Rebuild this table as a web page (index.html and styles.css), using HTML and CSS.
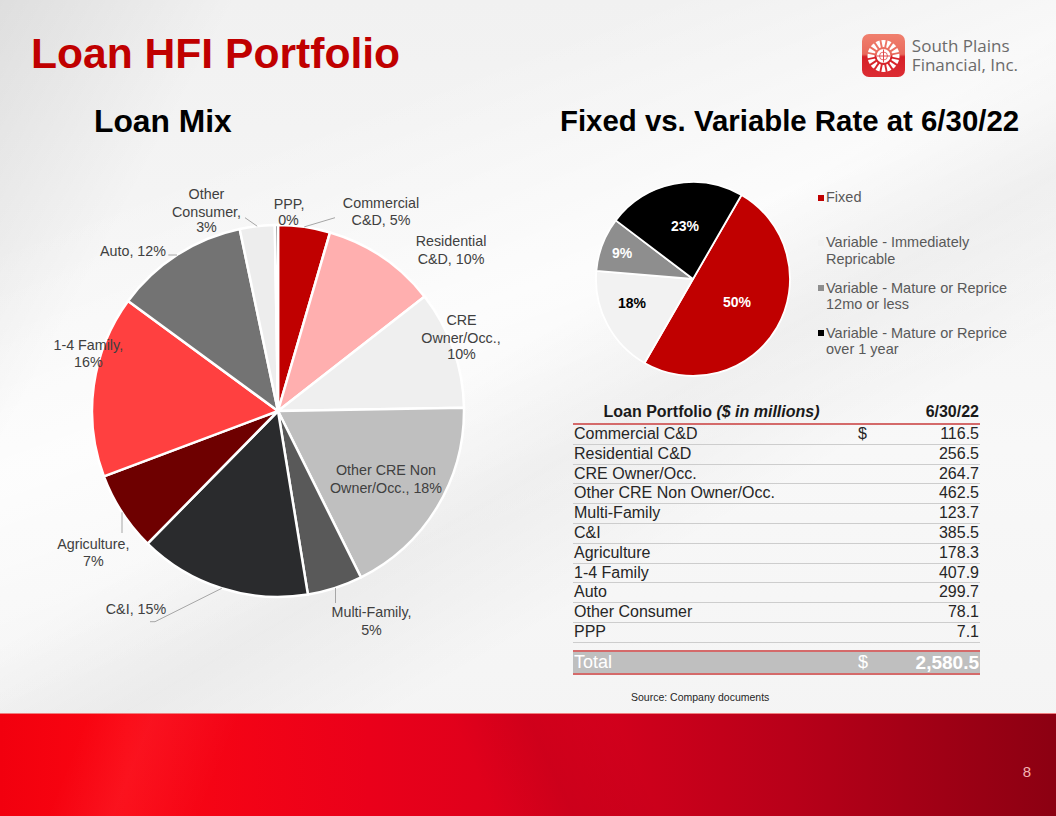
FILE: index.html
```html
<!DOCTYPE html>
<html lang="en">
<head>
<meta charset="utf-8">
<title>Loan HFI Portfolio</title>
<link rel="stylesheet" href="styles.css">
</head>
<body>
<div class="slide">
  <header class="top">
    <h1 class="title">Loan HFI Portfolio</h1>
    <div class="logo">
      <svg class="logo-mark" viewBox="0 0 43 43" width="43" height="43" aria-hidden="true">
        <defs>
          <linearGradient id="lg" x1="0" y1="0" x2="0" y2="1">
            <stop offset="0" stop-color="#f0806e"/>
            <stop offset="0.47" stop-color="#e96a5c"/>
            <stop offset="0.53" stop-color="#d62027"/>
            <stop offset="1" stop-color="#dc2c33"/>
          </linearGradient>
          <mask id="wheelmask">
            <rect width="43" height="43" fill="#fff"/>
            <g stroke="#000" stroke-width="1.9">
              <line x1="21.5" y1="2" x2="21.5" y2="42" transform="rotate(11.25 21.5 22)"/>
              <line x1="21.5" y1="2" x2="21.5" y2="42" transform="rotate(33.75 21.5 22)"/>
              <line x1="21.5" y1="2" x2="21.5" y2="42" transform="rotate(56.25 21.5 22)"/>
              <line x1="21.5" y1="2" x2="21.5" y2="42" transform="rotate(78.75 21.5 22)"/>
              <line x1="21.5" y1="2" x2="21.5" y2="42" transform="rotate(101.25 21.5 22)"/>
              <line x1="21.5" y1="2" x2="21.5" y2="42" transform="rotate(123.75 21.5 22)"/>
              <line x1="21.5" y1="2" x2="21.5" y2="42" transform="rotate(146.25 21.5 22)"/>
              <line x1="21.5" y1="2" x2="21.5" y2="42" transform="rotate(168.75 21.5 22)"/>
            </g>
            <circle cx="21.5" cy="22" r="9" fill="#000"/>
          </mask>
        </defs>
        <rect width="43" height="43" rx="7" fill="url(#lg)"/>
        <circle cx="21.5" cy="22" r="16" fill="#fff" mask="url(#wheelmask)"/>
        <circle cx="21.5" cy="22" r="7" fill="#fff"/>
        <path d="M21.5 15.5v13M15 22h13" stroke="#e0474a" stroke-width="1"/>
        <circle cx="21.5" cy="22" r="4" fill="none" stroke="#e0474a" stroke-width="0.8"/>
      </svg>
      <p class="logo-text">South Plains<br>Financial, Inc.</p>
    </div>
  </header>

  <main class="content">
    <section class="mix">
      <h2 class="mix-title">Loan Mix</h2>
      <svg class="mix-chart" viewBox="0 139 540 574" width="540" height="574">
        <g class="slices">
          <path d="M278 411 L278 225 A186 186 0 0 1 330.06 232.43 Z" fill="#c00000"/>
          <path d="M278 411 L330.06 232.43 A186 186 0 0 1 424.67 296.61 Z" fill="#ffafaf"/>
          <path d="M278 411 L424.67 296.61 A186 186 0 0 1 463.97 407.64 Z" fill="#efefef"/>
          <path d="M278 411 L463.97 407.64 A186 186 0 0 1 361.02 577.44 Z" fill="#bfbfbf"/>
          <path d="M278 411 L361.02 577.44 A186 186 0 0 1 307.91 594.58 Z" fill="#595959"/>
          <path d="M278 411 L307.91 594.58 A186 186 0 0 1 147.56 543.6 Z" fill="#2a2b2d"/>
          <path d="M278 411 L147.56 543.6 A186 186 0 0 1 103.89 476.44 Z" fill="#6e0000"/>
          <path d="M278 411 L103.89 476.44 A186 186 0 0 1 128.1 300.89 Z" fill="#ff4040"/>
          <path d="M278 411 L128.1 300.89 A186 186 0 0 1 239.7 228.99 Z" fill="#737373"/>
          <path d="M278 411 L239.7 228.99 A186 186 0 0 1 274.79 225.03 Z" fill="#ededed"/>
          <path d="M278 411 L274.79 225.03 A186 186 0 0 1 278 225 Z" fill="#808080"/>
        </g>
        <g class="leaders">
          <path d="M304.2 226.9 L335 217.7"/>
          <path d="M257.2 226.2 L245 217.7"/>
          <path d="M177 255 L168.3 255"/>
          <path d="M335.5 588 L335.5 603"/>
          <path d="M221.8 588.3 L155 621.7 L150 621.7"/>
          <path d="M122 512.3 L122 533"/>
        </g>
        <g class="lbl">
          <text x="206.5" y="199">Other</text>
          <text x="206.5" y="216.5">Consumer,</text>
          <text x="206.5" y="232">3%</text>
          <text x="289" y="208.5">PPP,</text>
          <text x="288.5" y="225">0%</text>
          <text x="381" y="208">Commercial</text>
          <text x="381" y="225">C&amp;D, 5%</text>
          <text x="451" y="246">Residential</text>
          <text x="451" y="263.5">C&amp;D, 10%</text>
          <text x="461.5" y="325">CRE</text>
          <text x="461" y="342.5">Owner/Occ.,</text>
          <text x="461.5" y="358.5">10%</text>
          <text x="386" y="475">Other CRE Non</text>
          <text x="386" y="492.5">Owner/Occ., 18%</text>
          <text x="371.5" y="617">Multi-Family,</text>
          <text x="371.5" y="634.5">5%</text>
          <text x="136" y="614">C&amp;I, 15%</text>
          <text x="93.3" y="549">Agriculture,</text>
          <text x="93.3" y="566">7%</text>
          <text x="88.3" y="350">1-4 Family,</text>
          <text x="88.3" y="367">16%</text>
          <text x="166" y="256" class="end">Auto, 12%</text>
        </g>
      </svg>
    </section>

    <section class="rate">
      <h2 class="rate-title">Fixed vs. Variable Rate at 6/30/22</h2>
      <div class="rate-row">
        <svg class="rate-pie" viewBox="0 0 196 196" width="196" height="196">
          <g class="rate-slices">
            <path d="M98 98 L146.5 14 A97 97 0 0 1 182 146.5 A97 97 0 0 1 49.5 182 Z" fill="#c00000"/>
            <path d="M98 98 L49.5 182 A97 97 0 0 1 1.34 89.88 Z" fill="#f2f2f2"/>
            <path d="M98 98 L1.34 89.88 A97 97 0 0 1 20.74 39.35 Z" fill="#8e8e8e"/>
            <path d="M98 98 L20.74 39.35 A97 97 0 0 1 146.5 14 Z" fill="#000"/>
          </g>
          <g class="pct">
            <text x="142" y="126" class="light">50%</text>
            <text x="37" y="127">18%</text>
            <text x="27" y="77" class="light">9%</text>
            <text x="90" y="50" class="light">23%</text>
          </g>
        </svg>
        <ul class="legend">
          <li><span class="swatch sw-fixed"></span><span>Fixed</span></li>
          <li><span class="swatch sw-imm"></span><span>Variable - Immediately<br>Repricable</span></li>
          <li><span class="swatch sw-12"></span><span>Variable - Mature or Reprice<br>12mo or less</span></li>
          <li><span class="swatch sw-1y"></span><span>Variable - Mature or Reprice<br>over 1 year</span></li>
        </ul>
      </div>

      <table class="portfolio">
        <colgroup>
          <col class="c-name">
          <col class="c-cur">
          <col class="c-val">
        </colgroup>
        <thead>
          <tr>
            <th class="h-name">Loan Portfolio <em>($ in millions)</em></th>
            <th class="h-date" colspan="2">6/30/22</th>
          </tr>
        </thead>
        <tbody>
          <tr><td>Commercial C&amp;D</td><td class="cur">$</td><td class="num">116.5</td></tr>
          <tr><td>Residential C&amp;D</td><td class="cur"></td><td class="num">256.5</td></tr>
          <tr><td>CRE Owner/Occ.</td><td class="cur"></td><td class="num">264.7</td></tr>
          <tr><td>Other CRE Non Owner/Occ.</td><td class="cur"></td><td class="num">462.5</td></tr>
          <tr><td>Multi-Family</td><td class="cur"></td><td class="num">123.7</td></tr>
          <tr><td>C&amp;I</td><td class="cur"></td><td class="num">385.5</td></tr>
          <tr><td>Agriculture</td><td class="cur"></td><td class="num">178.3</td></tr>
          <tr><td>1-4 Family</td><td class="cur"></td><td class="num">407.9</td></tr>
          <tr><td>Auto</td><td class="cur"></td><td class="num">299.7</td></tr>
          <tr><td>Other Consumer</td><td class="cur"></td><td class="num">78.1</td></tr>
          <tr><td>PPP</td><td class="cur"></td><td class="num">7.1</td></tr>
          <tr class="spacer"><td colspan="3"></td></tr>
          <tr class="total"><td>Total</td><td class="cur">$</td><td class="num">2,580.5</td></tr>
        </tbody>
      </table>
      <p class="source">Source: Company documents</p>
    </section>
  </main>

  <footer class="band">
    <span class="page-num">8</span>
  </footer>
</div>
</body>
</html>
```

FILE: styles.css
```css
html, body {
  margin: 0;
  padding: 0;
}

body {
  font-family: "Liberation Sans", Arial, sans-serif;
  background: #ffffff;
}

.slide {
  width: 1056px;
  height: 816px;
  display: flex;
  flex-direction: column;
  overflow: hidden;
  background:
    linear-gradient(118deg, rgba(0, 0, 0, 0.08) 0, rgba(0, 0, 0, 0) 16%),
    linear-gradient(150deg, rgba(0, 0, 0, 0) 45%, rgba(0, 0, 0, 0.04) 55%, rgba(0, 0, 0, 0) 66%),
    linear-gradient(160deg, rgba(255, 255, 255, 0) 20%, rgba(255, 255, 255, 0.7) 40%, rgba(255, 255, 255, 0) 60%),
    linear-gradient(180deg, #f1f1f1 0%, #f8f8f8 55%, #f3f3f3 100%);
}

/* ---------- header ---------- */
.top {
  height: 103px;
  box-sizing: border-box;
  padding: 29px 38px 0 31px;
  display: flex;
  justify-content: space-between;
  align-items: flex-start;
  flex: none;
}

.title {
  margin: 0;
  font-size: 42.6px;
  line-height: 48px;
  font-weight: 700;
  color: #c00000;
}

.logo {
  display: flex;
  align-items: center;
  gap: 7px;
  margin-top: 5px;
}

.logo-mark {
  display: block;
  flex: none;
}

.logo-text {
  margin: 0;
  font-family: "Open Sans", "Noto Sans", sans-serif;
  font-size: 17px;
  line-height: 18.3px;
  color: #6b6b6b;
  white-space: nowrap;
}

/* ---------- content ---------- */
.content {
  flex: 1;
  display: grid;
  grid-template-columns: 540px 1fr;
  min-height: 0;
}

.mix-title {
  margin: 0 0 0 94px;
  font-size: 31.8px;
  line-height: 36px;
  font-weight: 700;
  color: #000;
}

.mix-chart {
  display: block;
}

.slices path {
  stroke: #ffffff;
  stroke-width: 2.5;
  stroke-linejoin: round;
}

.leaders path {
  fill: none;
  stroke: #a6a6a6;
  stroke-width: 1;
}

.lbl text {
  font-family: "Liberation Sans", Arial, sans-serif;
  font-size: 14.3px;
  fill: #404040;
  text-anchor: middle;
}

.lbl text.end {
  text-anchor: end;
}

.rate-title {
  margin: 0 0 0 20px;
  font-size: 29.4px;
  line-height: 36px;
  font-weight: 700;
  color: #000;
  white-space: nowrap;
}

.rate-row {
  display: flex;
  align-items: flex-start;
  margin-top: 42px;
  padding-left: 55px;
  height: 196px;
}

.rate-pie {
  display: block;
  flex: none;
}

.rate-slices path {
  stroke: #ffffff;
  stroke-width: 1.8;
  stroke-linejoin: round;
}

.pct text {
  font-family: "Liberation Sans", Arial, sans-serif;
  font-size: 14px;
  font-weight: 700;
  fill: #000;
  text-anchor: middle;
}

.pct text.light {
  fill: #ffffff;
}

.legend {
  list-style: none;
  margin: 8px 0 0 27px;
  padding: 0;
  font-size: 14.5px;
  line-height: 16.5px;
  color: #595959;
}

.legend li {
  display: flex;
  align-items: flex-start;
  gap: 2px;
  height: 45.3px;
  white-space: nowrap;
}

.swatch {
  width: 6px;
  height: 6px;
  flex: none;
  margin-top: 5.5px;
}

.sw-fixed { background: #c00000; }
.sw-imm { background: #f2f2f2; }
.sw-12 { background: #8e8e8e; }
.sw-1y { background: #000000; }

/* ---------- table ---------- */
.portfolio {
  width: 407px;
  margin: 24px 0 0 33px;
  border-collapse: collapse;
  table-layout: fixed;
  font-size: 16px;
  color: #262626;
}

.c-name { width: 277px; }
.c-cur { width: 30px; }
.c-val { width: 100px; }

.portfolio th {
  font-weight: 700;
  line-height: 22px;
  padding: 0 1px;
  border-bottom: 2px solid #d46a6a;
  color: #1a1a1a;
  white-space: nowrap;
}

.portfolio th em {
  font-style: italic;
}

.h-name {
  text-align: center;
}

.h-date {
  text-align: right;
}

.portfolio td {
  line-height: 18.8px;
  padding: 0 1px;
  border-bottom: 1px solid #cdcdcd;
  white-space: nowrap;
}

.portfolio td.cur {
  padding-left: 8px;
}

.portfolio td.num {
  text-align: right;
}

.portfolio .spacer td {
  height: 7px;
  line-height: 0;
  padding: 0;
  border-bottom: 0;
}

.portfolio .total td {
  background: #bfbfbf;
  color: #ffffff;
  font-size: 18px;
  line-height: 21px;
  border-top: 2px solid #d46a6a;
  border-bottom: 2px solid #d46a6a;
}

.portfolio .total td.num {
  font-weight: 700;
  font-size: 19px;
}

.source {
  margin: 15px 0 0 91px;
  font-size: 10.5px;
  line-height: 14px;
  color: #262626;
}

/* ---------- footer ---------- */
.band {
  height: 103px;
  flex: none;
  box-sizing: border-box;
  display: flex;
  justify-content: flex-end;
  align-items: flex-start;
  padding: 49px 25px 0 0;
  border-top: 1px solid #ef7f80;
  background:
    linear-gradient(112deg, rgba(255, 255, 255, 0) 8%, rgba(255, 255, 255, 0.05) 14%, rgba(255, 255, 255, 0) 22%),
    linear-gradient(65deg, rgba(0, 0, 0, 0) 45%, rgba(0, 0, 0, 0.05) 52%, rgba(0, 0, 0, 0) 60%),
    linear-gradient(90deg, #f2000e 0%, #fb0612 12%, #ea001a 35%, #d6001c 55%, #b80019 75%, #8c0012 100%);
}

.page-num {
  font-size: 15px;
  line-height: 18px;
  color: #f4b4b4;
}
```
